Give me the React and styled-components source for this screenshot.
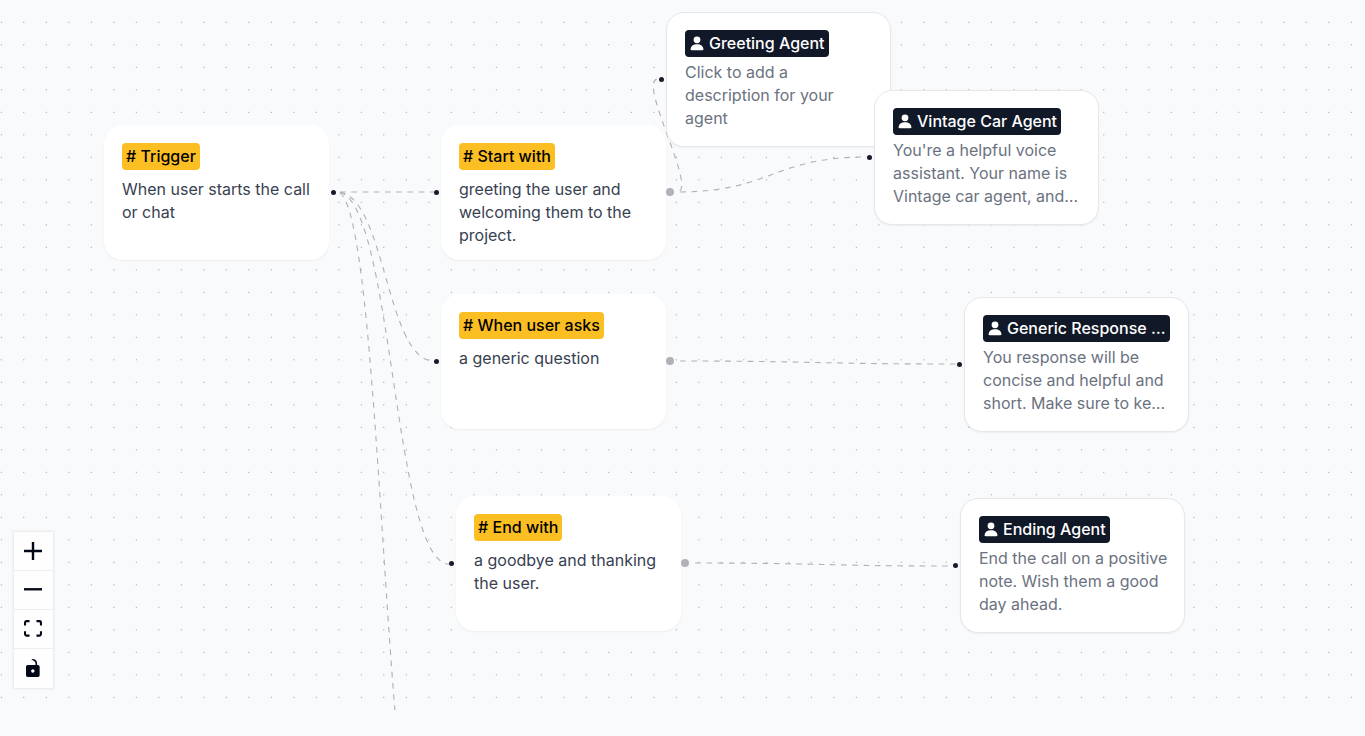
import { createGlobalStyle, styled } from "styled-components";

const nodes = [
  {
    id: "greeting",
    type: "agent",
    x: 666,
    y: 12,
    title: "Greeting Agent",
    text: "Click to add a description for your agent",
  },
  {
    id: "trigger",
    type: "trigger",
    x: 104,
    y: 125,
    title: "# Trigger",
    text: "When user starts the call or chat",
    output: "dark",
  },
  {
    id: "start",
    type: "condition",
    x: 441,
    y: 125,
    title: "# Start with",
    text: "greeting the user and welcoming them to the project.",
    output: "grey",
  },
  {
    id: "asks",
    type: "condition",
    x: 441,
    y: 294,
    title: "# When user asks",
    text: "a generic question",
    output: "grey",
  },
  {
    id: "end",
    type: "condition",
    x: 456,
    y: 496,
    title: "# End with",
    text: "a goodbye and thanking the user.",
    output: "grey",
  },
  {
    id: "vintage",
    type: "agent",
    x: 874,
    y: 90,
    title: "Vintage Car Agent",
    text: "You're a helpful voice assistant. Your name is Vintage car agent, and…",
  },
  {
    id: "generic",
    type: "agent",
    x: 964,
    y: 297,
    title: "Generic Response …",
    text: "You response will be concise and helpful and short. Make sure to ke…",
  },
  {
    id: "ending",
    type: "agent",
    x: 960,
    y: 498,
    title: "Ending Agent",
    text: "End the call on a positive note. Wish them a good day ahead.",
  },
];

const edges = [
  { from: [337, 192], to: [434, 192] },
  { from: [337, 192], to: [434, 361] },
  { from: [337, 192], to: [449, 564] },
  { from: [337, 192], to: [429, 892] },
  { from: [677, 192], to: [658, 79] },
  { from: [677, 192], to: [867, 157] },
  { from: [677, 361], to: [957, 364] },
  { from: [692, 563], to: [953, 566] },
];

const bezier = ({ from, to }) => {
  const [x1, y1] = from;
  const [x2, y2] = to;
  const offset = x2 >= x1 ? (x2 - x1) / 2 : 22;
  return `M${x1},${y1} C${x1 + offset},${y1} ${x2 - offset},${y2} ${x2},${y2}`;
};

function PersonIcon() {
  return (
    <svg width="16" height="16" viewBox="0 0 16 16" fill="currentColor" aria-hidden="true">
      <circle cx="8" cy="4.8" r="3.4" />
      <path d="M8 9.2c3.900 0 6.100 2 6.400 4.800.1.800-.3 1.200-1 1.200H2.600c-.7 0-1.100-.4-1-1.200C1.900 11.200 4.100 9.200 8 9.200z" />
    </svg>
  );
}

function FlowNode({ node }) {
  const isAgent = node.type === "agent";
  return (
    <Card $x={node.x} $y={node.y} $agent={isAgent}>
      <Badge $agent={isAgent}>
        {isAgent && <PersonIcon />}
        {node.title}
      </Badge>
      <Description $agent={isAgent}>{node.text}</Description>
      {node.type !== "trigger" && <InputHandle />}
      {node.output && <OutputHandle $grey={node.output === "grey"} />}
    </Card>
  );
}

function Controls() {
  return (
    <ControlPanel>
      <ControlButton type="button" aria-label="zoom in">
        <svg width="18" height="18" viewBox="0 0 32 32">
          <path d="M32 18.133H18.133V32h-4.266V18.133H0v-4.266h13.867V0h4.266v13.867H32z" />
        </svg>
      </ControlButton>
      <ControlButton type="button" aria-label="zoom out">
        <svg width="18" height="3" viewBox="0 0 32 5">
          <path d="M0 0h32v4.2H0z" />
        </svg>
      </ControlButton>
      <ControlButton type="button" aria-label="fit view">
        <svg width="18" height="17" viewBox="0 0 32 30">
          <path d="M3.692 4.63c0-.53.4-.938.939-.938h5.215V0H4.708C2.13 0 0 2.054 0 4.63v5.216h3.692V4.631zM27.354 0h-5.2v3.692h5.17c.53 0 .984.4.984.939v5.215H32V4.631A4.624 4.624 0 0027.354 0zm.954 24.83c0 .532-.4.94-.939.94h-5.215v3.768h5.215c2.577 0 4.631-2.13 4.631-4.707v-5.139h-3.692v5.139zm-23.677.94c-.531 0-.939-.4-.939-.94v-5.138H0v5.139c0 2.577 2.13 4.707 4.708 4.707h5.138V25.77H4.631z" />
        </svg>
      </ControlButton>
      <ControlButton type="button" aria-label="toggle interactivity">
        <svg width="14" height="18" viewBox="0 0 25 32">
          <path d="M21.333 10.667H19.81V7.619C19.81 3.429 16.38 0 12.19 0c-4.114 1.828-1.37 2.133.305 2.438 1.676.305 4.42 2.59 4.42 5.181v3.048H3.047A3.056 3.056 0 000 13.714v15.238A3.056 3.056 0 003.048 32h18.285a3.056 3.056 0 003.048-3.048V13.714a3.056 3.056 0 00-3.048-3.047zM12.19 24.533a3.056 3.056 0 01-3.047-3.047 3.056 3.056 0 013.047-3.048 3.056 3.056 0 013.048 3.048 3.056 3.056 0 01-3.048 3.047z" />
        </svg>
      </ControlButton>
    </ControlPanel>
  );
}

export default function App() {
  return (
    <Page>
      <GlobalStyle />
      <Canvas>
        <Layer aria-hidden="true">
          <pattern
            id="dots"
            x="1.3"
            y="22.3"
            width="22.5"
            height="22.5"
            patternUnits="userSpaceOnUse"
            patternTransform="translate(-11.25 -11.25)"
          >
            <circle cx="11.25" cy="11.25" r="0.5625" fill="#81818a" />
          </pattern>
          <rect y="1" width="100%" height="100%" fill="url(#dots)" />
          {edges.map((edge) => (
            <Edge key={bezier(edge)} d={bezier(edge)} />
          ))}
        </Layer>
        {nodes.map((node) => (
          <FlowNode key={node.id} node={node} />
        ))}
        <Controls />
      </Canvas>
    </Page>
  );
}

const GlobalStyle = createGlobalStyle`
  * {
    box-sizing: border-box;
  }
  body {
    margin: 0;
    background-color: #f9fafc;
    font-family: Inter, "Liberation Sans", sans-serif;
  }
`;

const Page = styled.main`
  display: flex;
  flex-direction: column;
  min-height: 100vh;
  padding-bottom: 26px;
`;

const Canvas = styled.div`
  position: relative;
  flex: 1;
  overflow: hidden;
`;

const Layer = styled.svg`
  position: absolute;
  top: 0;
  left: 0;
  width: 100%;
  height: 100%;
`;

const Edge = styled.path`
  fill: none;
  stroke: #b1b1b7;
  stroke-width: 1.125;
  stroke-dasharray: 5.625;
  stroke-dashoffset: 8.25;
`;

const Card = styled.article`
  position: absolute;
  left: ${(props) => props.$x}px;
  top: ${(props) => props.$y}px;
  display: flex;
  flex-direction: column;
  align-items: flex-start;
  width: 225px;
  height: 135px;
  padding: 17px 16px 17px ${(props) => (props.$agent ? 18 : 17)}px;
  background-color: white;
  border-radius: 18px;
  border: 1px solid ${(props) => (props.$agent ? "#e5e7eb" : "white")};
  box-shadow: 0 1px 2px rgba(0, 0, 0, 0.05);
`;

const Badge = styled.h2`
  display: flex;
  flex-shrink: 0;
  align-items: center;
  gap: 4px;
  height: 27px;
  margin: 0;
  padding: 0 4px 1px;
  border-radius: 4px;
  background-color: ${(props) => (props.$agent ? "#111827" : "#fbbf24")};
  color: ${(props) => (props.$agent ? "white" : "black")};
  font-size: 16px;
  font-weight: 500;
  line-height: 22px;
  white-space: nowrap;
`;

const Description = styled.p`
  margin: ${(props) => (props.$agent ? "4px" : "8px")} 0 0;
  color: ${(props) => (props.$agent ? "#6b7280" : "#374151")};
  font-size: 16px;
  line-height: 23px;
`;

const InputHandle = styled.span`
  position: absolute;
  top: 64px;
  left: -8px;
  width: 5px;
  height: 5px;
  border-radius: 50%;
  background-color: #1a192b;
`;

const OutputHandle = styled.span`
  position: absolute;
  top: ${(props) => (props.$grey ? 62 : 64)}px;
  right: ${(props) => (props.$grey ? -9 : -8)}px;
  width: ${(props) => (props.$grey ? 8 : 5)}px;
  height: ${(props) => (props.$grey ? 8 : 5)}px;
  border-radius: 50%;
  background-color: ${(props) => (props.$grey ? "#b1b1b7" : "#1a192b")};
`;

const ControlPanel = styled.div`
  position: absolute;
  left: 14px;
  bottom: 22px;
  display: flex;
  flex-direction: column;
  background-color: #fefefe;
  box-shadow: 0 0 2px 1px rgba(0, 0, 0, 0.08);
`;

const ControlButton = styled.button`
  display: flex;
  justify-content: center;
  align-items: center;
  width: 39px;
  height: 39px;
  padding: 0 1px 1px 0;
  border: none;
  border-bottom: 1px solid #eee;
  background-color: #fefefe;
  cursor: pointer;
  svg {
    fill: #020817;
  }
  &:last-child {
    border-bottom: none;
  }
`;
